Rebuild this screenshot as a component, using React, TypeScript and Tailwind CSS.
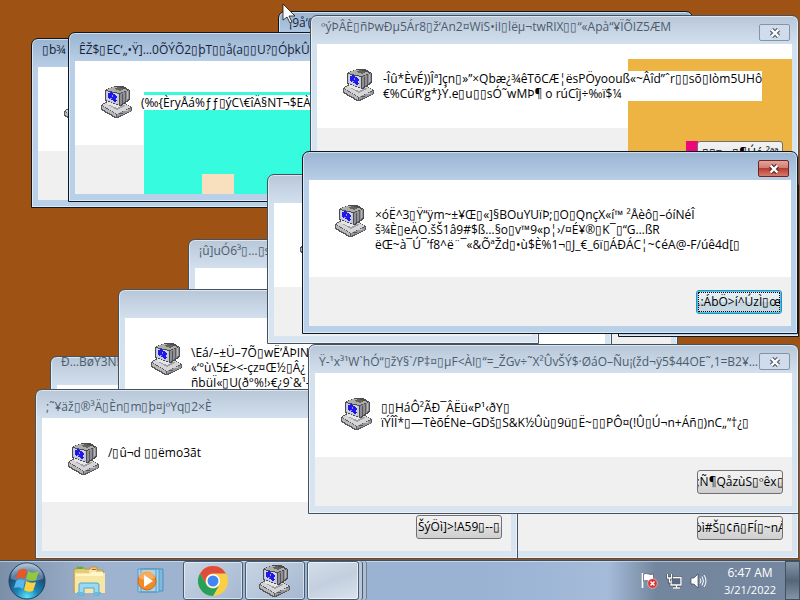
import type { ReactNode } from "react";

function ComputerIcon() {
  return (
    <svg width="32" height="32" viewBox="0 0 32 32" shapeRendering="crispEdges" aria-hidden="true">
      <polygon points="0,19 6,15 22,16 31,21 31,25 17,32 14,32 0,24" fill="#5a5a5e" />
      <polygon points="1,19 7,16 22,17 30,21 16,28" fill="#d6d6d8" />
      <polygon points="1,20 15,28 15,31 1,23" fill="#b8b8bb" />
      <polygon points="16,28 30,22 30,25 16,31" fill="#98989c" />
      <polygon points="6,18 10,17 23,19 24,20 16,24" fill="#a2a2a6" />
      <polygon points="4,4 11,1 15,0 22,0 29,4 29,14 20,20 16,20 4,15" fill="#4c4c50" />
      <polygon points="5,4 12,1 16,1 27,4 18,7" fill="#adaea8" />
      <polygon points="13,3 17,1 23,3 19,5" fill="#62635c" />
      <polygon points="5,5 18,8 18,19 5,14" fill="#c4c6d2" />
      <polygon points="6,6 17,8 16,17 6,13" fill="#cfd3f4" />
      <polygon points="7,7 10,6 12,8 15,9 16,11 14,13 16,15 14,16 11,14 8,13 7,11" fill="#1f18e6" />
      <rect x="11" y="9" width="1" height="2" fill="#8c90f2" />
      <rect x="9" y="12" width="2" height="1" fill="#8c90f2" />
      <polygon points="19,8 28,4 28,13 19,19" fill="#8f8f93" />
      <polygon points="21,8 22,7 22,16 21,17" fill="#55555a" />
      <polygon points="24,6 25,6 25,14 24,15" fill="#5d5d62" />
      <polygon points="26,5 27,5 27,13 26,13" fill="#b8b8bb" />
      <polygon points="6,15 16,19 20,20 16,22 6,18" fill="#e6e6e8" />
      <rect x="18" y="27" width="4" height="1" fill="#55555a" />
      <rect x="23" y="24" width="4" height="1" fill="#cdcdd0" />
    </svg>
  );
}

function CloseGlyph({ active }: { active?: boolean }) {
  return (
    <svg width="12" height="10" viewBox="0 0 12 10" aria-hidden="true">
      <path d="M2.5 1.5 9.5 8.5M9.5 1.5 2.5 8.5" stroke={active ? "#5b3030" : "#55606e"} strokeWidth="4.6" />
      <path d="M2.5 1.5 9.5 8.5M9.5 1.5 2.5 8.5" stroke="#fff" strokeWidth="2.4" />
    </svg>
  );
}

type WinProps = {
  place: string;
  title?: string;
  titlePad?: string;
  lines?: string[];
  textPad?: string;
  button?: string;
  active?: boolean;
  blue?: boolean;
  close?: boolean;
  tall?: boolean;
  icon?: boolean;
  overlay?: ReactNode;
};

function Win({ place, title, titlePad = "pt-2", lines = [], textPad = "pt-0.5", button, active, blue, close, tall, icon = true, overlay }: WinProps) {
  const frame = active || blue
    ? "border-[#0c1826] bg-[linear-gradient(#9ab4d1,#b9cfe7_29px,#b9d1e8)]"
    : "border-[#435160] bg-[linear-gradient(#b8c7d8,#d3e0ee_29px,#d8e5f1)]";
  return (
    <section
      aria-label={title || "Message"}
      className={`absolute isolate flex flex-col rounded-t-[7px] border px-1.5 pb-[7px] shadow-[inset_0_0_0_1px_rgba(255,255,255,0.55)] ${frame} ${place}`}
    >
      <header className="flex h-7 shrink-0 items-start justify-between">
        <h2 className={`grow truncate pl-1 leading-[18px] ${titlePad} ${blue ? "text-[#132338]" : "text-[#4d5c6c]"}`}>
          {title}
        </h2>
        {close && (
          <button
            type="button"
            aria-label="Close"
            className={`mt-2 mr-0.5 flex h-[17px] w-[31px] shrink-0 items-center justify-center rounded-xs border ${
              active
                ? "border-[#6d2525] bg-[linear-gradient(#e4a59a,#d17a70_48%,#b83b32_50%,#d47c6c)]"
                : "border-[#8494a8] bg-[#d0dceb]"
            }`}
          >
            <CloseGlyph active={active} />
          </button>
        )}
      </header>
      <div className="relative flex grow flex-col overflow-hidden">
        <div className={`flex shrink-0 gap-2 bg-white pt-[25px] pl-[26px] ${tall ? "h-[97px]" : "h-[84px]"}`}>
          <span className="size-8 shrink-0">{icon && <ComputerIcon />}</span>
          <div className={`relative z-10 leading-[15px] whitespace-nowrap text-black ${textPad}`}>
            <div className={overlay ? "bg-white" : undefined}>
              {lines.map((line) => (
                <p key={line}>{line}</p>
              ))}
            </div>
          </div>
        </div>
        <div className="flex grow justify-end bg-[#f0f0f0] pt-[13px] pr-[9px]">
          {button && (
            <button
              type="button"
              className={`relative z-10 flex h-6 w-[86px] items-center justify-center overflow-hidden rounded-[3px] border whitespace-nowrap text-black ${
                active
                  ? "border-[#2c8fb5] bg-[linear-gradient(#eaf2f6,#dde8ee_50%,#c5d4dc_50%,#c9dce6)] shadow-[inset_0_0_0_1px_#48c4ee] outline-1 -outline-offset-3 outline-dotted outline-black"
                  : "border-[#707070] bg-[linear-gradient(#f2f2f2,#ebebeb_50%,#dddddd_50%,#cfcfcf)]"
              }`}
            >
              {button}
            </button>
          )}
        </div>
        {overlay}
      </div>
    </section>
  );
}

function StartOrb() {
  return (
    <svg width="38" height="38" viewBox="0 0 38 38" aria-hidden="true">
      <defs>
        <radialGradient id="orb" cx="50%" cy="95%" r="90%">
          <stop offset="0" stopColor="#5fe3f7" />
          <stop offset="0.35" stopColor="#1a86b8" />
          <stop offset="0.75" stopColor="#1d4a76" />
          <stop offset="1" stopColor="#8da9c4" />
        </radialGradient>
      </defs>
      <circle cx="19" cy="19" r="18" fill="url(#orb)" stroke="#22415e" />
      <path d="M3 17a16 16 0 0 1 32 0q-16 5-32 0z" fill="#fff" opacity="0.28" />
      <path d="M10 9q5-4 9-1l-2 9q-4-3-9 0z" fill="#e8572a" />
      <path d="M20 9q5 3 11 0l-3 9q-5 2-10-1z" fill="#93c83e" />
      <path d="M8 19q4-3 9 0l-2 8q-4-3-9-1z" fill="#58b8ee" />
      <path d="M18 19q5 3 10 1l-3 9q-5 2-9-1z" fill="#fbd13c" />
    </svg>
  );
}

function ExplorerIcon() {
  return (
    <svg width="34" height="32" viewBox="0 0 34 32" aria-hidden="true">
      <path d="M2 4h3V2h7v2h6V2h7v3h6v22H2z" fill="#e7cb73" stroke="#b49a50" />
      <rect x="5" y="2" width="6" height="2" fill="#4bb34c" />
      <rect x="20" y="4" width="4" height="2" fill="#d74c3a" />
      <path d="M17 5h7v3h9v20H3V8h14z" fill="#f8e7a4" />
      <path d="M4 9h14l2-2h11v4H4z" fill="#fff5c8" />
      <path d="M7 30V20q0-2 2-2h16q2 0 2 2v10h-5v-7H12v7z" fill="#9bd9f1" stroke="#50a7cd" />
      <path d="M5 28h6M23 28h6" stroke="#62bde1" strokeWidth="2" />
    </svg>
  );
}

function MediaIcon() {
  return (
    <svg width="30" height="28" viewBox="0 0 30 28" aria-hidden="true">
      <path d="M8 2h19v22H8z" fill="#7fb9dc" stroke="#4d8fbd" />
      <path d="M5 2h18v23H5zM2 2h18v23H2z" fill="#a5d4ee" stroke="#559bc7" />
      <circle cx="11" cy="14" r="9" fill="#f18b27" stroke="#d26a15" />
      <path d="M3 11a8 8 0 0 1 16 0q-8 4-16 0z" fill="#fbc487" opacity="0.6" />
      <path d="M8 8v12l9-6z" fill="#fff" />
    </svg>
  );
}

function ChromeIcon() {
  return (
    <svg width="30" height="30" viewBox="0 0 30 30" aria-hidden="true">
      <circle cx="15" cy="15" r="15" fill="#f9cf45" />
      <path d="M2 7.5A15 15 0 0 1 28 7.5H15a7.5 7.5 0 0 0-6.5 11.2z" fill="#df4b3c" />
      <path d="M2 7.5 8.5 18.7A7.5 7.5 0 0 0 21.5 18.7L15 30A15 15 0 0 1 2 7.5z" fill="#26a05a" />
      <circle cx="15" cy="15" r="7" fill="#fff" />
      <circle cx="15" cy="15" r="5.5" fill="#4285f4" />
    </svg>
  );
}

function TrayIcons() {
  return (
    <div className="flex items-center gap-2">
      <svg width="17" height="17" viewBox="0 0 17 17" aria-label="Action Center">
        <path d="M1.5 1v15" stroke="#fff" strokeWidth="1.6" />
        <path d="M2.5 2q3-1 5 0t5 0v7q-3 1-5 0t-5 0z" fill="#fff" stroke="#3b4654" strokeWidth="0.6" />
        <circle cx="11.5" cy="11.5" r="4.8" fill="#dc2f2f" stroke="#fff" strokeWidth="0.5" />
        <path d="m9.5 9.5 4 4m0-4-4 4" stroke="#fff" strokeWidth="1.5" />
      </svg>
      <svg width="16" height="16" viewBox="0 0 16 16" aria-label="Network">
        <path d="M5 4.5h10v7.5H5zM7 15h7M10.5 12v3" fill="#596a7f" stroke="#28333f" strokeWidth="2.6" />
        <path d="M5 4.5h10v7.5H5zM7 15h7M10.5 12v3" fill="#596a7f" stroke="#fff" strokeWidth="1.4" />
        <path d="M1.5 1v4h4V1M3.5 5v4H5" fill="none" stroke="#28333f" strokeWidth="2.6" />
        <path d="M1.5 1v4h4V1M3.5 5v4H5" fill="none" stroke="#fff" strokeWidth="1.4" />
      </svg>
      <svg width="17" height="16" viewBox="0 0 17 16" aria-label="Volume">
        <path d="M1 5h3l4-4v14l-4-4H1z" fill="#fff" stroke="#3b4654" strokeWidth="0.7" />
        <path d="M10 5.5q2 2.5 0 5M12 3.5q3 4.5 0 9M14 2q4 6 0 12" fill="none" stroke="#fff" strokeWidth="1" />
      </svg>
    </div>
  );
}

const taskButton =
  "flex h-full items-center justify-center rounded-[3px] border border-[#4a5b70] bg-[linear-gradient(135deg,#c7d4e5,#a5b8d0)] shadow-[inset_0_0_0_1px_rgba(255,255,255,0.5)]";

export default function App() {
  return (
    <main className="relative flex h-screen flex-col overflow-hidden bg-[#9e5214] font-['Open_Sans','Liberation_Sans',sans-serif] text-[12px]">
      <div className="relative grow overflow-hidden">
        <Win place="left-[278px] top-[11px] w-[415px] h-[170px]" title="¡9å‘(" titlePad="pt-0.5" blue />
        <Win place="left-[31px] top-[38px] w-[300px] h-[170px]" title="▯b¾" titlePad="pt-0.5" blue />
        <Win
          place="left-[68px] top-[32px] w-[300px] h-[170px]"
          title="ÊŽ$▯EC‘„•Ÿ]…0ÕÝÕ2▯þT▯▯å(a▯▯U?▯ÓþkÛ"
          lines={["(‰{ÈryÅá%ƒƒ▯ýC\\€îÄ§NT¬$EÀ"]}
          textPad="pt-[9px]"
          blue
          overlay={
            <>
              <div className="absolute top-[31px] right-0 bottom-0 left-[69px] bg-[#36fbdf]" />
              <div className="absolute bottom-0 left-[127px] h-5 w-8 bg-[#f8dfbd]" />
            </>
          }
        />
        <Win place="left-[50px] top-[356px] w-[200px] h-[170px]" title="Ð…BøY3N!" titlePad="-mt-1" />
        <Win place="left-[188px] top-[239px] w-[200px] h-[170px]" title="¡û]uÓ6³▯…▯s" titlePad="pt-0.5" />
        <Win
          place="left-[118px] top-[289px] w-[300px] h-[183px]"
          lines={["\\Eá/–±Ü–7Õ▯wË’ÅÞIN", "«‘°ù\\5£><-çz¤Œ½▯Â¿", "ñbüÏ«▯U(ð°%!›€¿9`&¹-"]}
          tall
        />
        <Win place="left-[450px] top-[200px] w-[228px] h-[200px]" tall icon={false} />
        <Win place="left-[400px] top-[266px] w-[212px] h-[170px]" icon={false} />
        <Win place="left-[618px] top-[167px] w-[181px] h-[170px]" icon={false} blue />
        <Win place="left-[300px] top-[390px] w-[499px] h-[169px]" button="òì#Š▯¢ñ▯FÍ▯~nÁ" />
        <Win
          place="left-[35px] top-[389px] w-[483px] h-[170px]"
          title=";˜¥äž▯®³Ä▯Èn▯m▯þ¤jºYq▯2×È"
          lines={["/▯û¬d ▯▯ëmo3ãt"]}
          button="ŠýÖì]>!A59▯--▯"
        />
        <Win place="left-[267px] top-[174px] w-[272px] h-[170px]" />
        <Win
          place="left-[310px] top-[15px] w-[489px] h-[170px]"
          title="ºýÞÂÈ▯ñÞwÐµ5Ár8▯ž‘An2¤WiS•iI▯lëµ¬twRIX▯▯“«Apà“¥ÏÕIZ5ÆM"
          titlePad="pt-0.5"
          lines={["-Îû*ÈvÉ))Îª]çn▯»’’×Qbæ¿¾êTõCÆ¦ësPÖyoouß«~Âîd”ˆr▯▯sõ▯Iòm5UHô", "€%CúR’g*}Ý.e▯u▯▯sÓ˜wMÞ¶  o rúCîj÷‰ï$¼"]}
          button="▯▯¤ ¬▯¶Úé ²ªª"
          close
          overlay={
            <>
              <div className="absolute top-[15px] right-0 bottom-0 w-[164px] bg-[#edb443]" />
              <div className="absolute top-[97px] right-[94px] h-6 w-3 bg-[#ec087b]" />
            </>
          }
        />
        <Win
          place="left-[308px] top-[344px] w-[491px] h-[170px]"
          title="Ÿ-¹x³¹W`hÓ“▯žY§`/P‡¤▯µF<ÀI▯“=_ŽGv÷˜X²ÛvŠÝ$·ØáO–Ñu¡(žd¬ÿ5$44OE˜‚1=B2¥<…"
          lines={["▯▯HáÔ²ÃÐ¯ÂËü«P¹‹ðY▯", "ïÝÎÎ*▯—TèõÉNe–GDš▯S&K½Ûù▯9ü▯Ë~▯▯PÔ¤(!Û▯Ú¬n+Áñ▯)nC„’‘†¿▯"]}
          button=";Ñ¶QåzùS▯ºêx▯"
          close
        />
        <Win
          place="left-[302px] top-[151px] w-[496px] h-[183px]"
          lines={[
            "×óË^3▯Ÿ“ÿm~±¥Œ▯«]§BOuYUïÞ;▯O▯QnçX«í™ ²Åèô▯–óíNéÎ",
            "š¾È▯eÄO.šŠ1â9#$ß…§o▯v™9«p¦›/¤É¥®▯K¯▯“G…ßR",
            "ëŒ~à¯Ú¯‘f8^ë¨¯«&ÕªŽd▯•ù$È%1¬▯J_€_6ï▯ÁÐÁC¦~¢éA@-F/úê4d[▯",
          ]}
          button=".:ÁbÖ>í^ÚzÌ▯œ"
          active
          close
          tall
        />
        <svg className="absolute top-1 left-[282px]" width="14" height="20" viewBox="0 0 14 20" aria-hidden="true">
          <path d="M1 0v16l4-3 3 6 2-1-3-6h6z" fill="#fff" stroke="#111" strokeWidth="0.8" />
        </svg>
      </div>
      <footer className="flex h-10 shrink-0 items-center border-t border-[#3f4d5d] bg-[linear-gradient(90deg,#7c8fa9,#9eb3cf_12%,#9ab3d3_60%,#a4bbd9_76%,#74869e_82%,#75879f)] shadow-[inset_0_1px_0_rgba(255,255,255,0.45)]">
        <button type="button" aria-label="Start" className="ml-2 w-[38px]"><StartOrb /></button>
        <button type="button" aria-label="Windows Explorer" className="ml-[26px] w-[34px]"><ExplorerIcon /></button>
        <button type="button" aria-label="Media Player" className="ml-[30px] w-[30px]"><MediaIcon /></button>
        <nav className="ml-[17px] flex h-full gap-0.5">
          <button type="button" aria-label="Chrome" className={`w-[60px] ${taskButton}`}><ChromeIcon /></button>
          <button type="button" aria-label="Messages" className={`w-[60px] ${taskButton}`}><ComputerIcon /></button>
          <div className="flex">
            <button type="button" aria-label="Group" className="h-full w-[52px] rounded-[3px] border border-[#4a5b70] bg-[linear-gradient(160deg,#d3deea,#c3cfde_50%,#dae3ee)] shadow-[inset_0_0_0_1px_rgba(255,255,255,0.6)]" />
            <span className="w-1 rounded-r-[3px] border-r border-[#4a5b70] bg-[#b9c7d8]" />
            <span className="w-1 rounded-r-[3px] border-r border-[#6f8197] bg-[#aebfd4]" />
          </div>
        </nav>
        <div className="ml-auto flex h-full items-center">
          <TrayIcons />
          <time className="mr-1 ml-3 w-[62px] text-center text-[12px] leading-[17px] text-white">
            6:47 AM
            <span className="block text-[11px]">3/21/2022</span>
          </time>
          <button type="button" aria-label="Show desktop" className="h-full w-[15px] border border-[#43515f] bg-[linear-gradient(#8696aa,#55657a_50%,#8394a9)]" />
        </div>
      </footer>
    </main>
  );
}
